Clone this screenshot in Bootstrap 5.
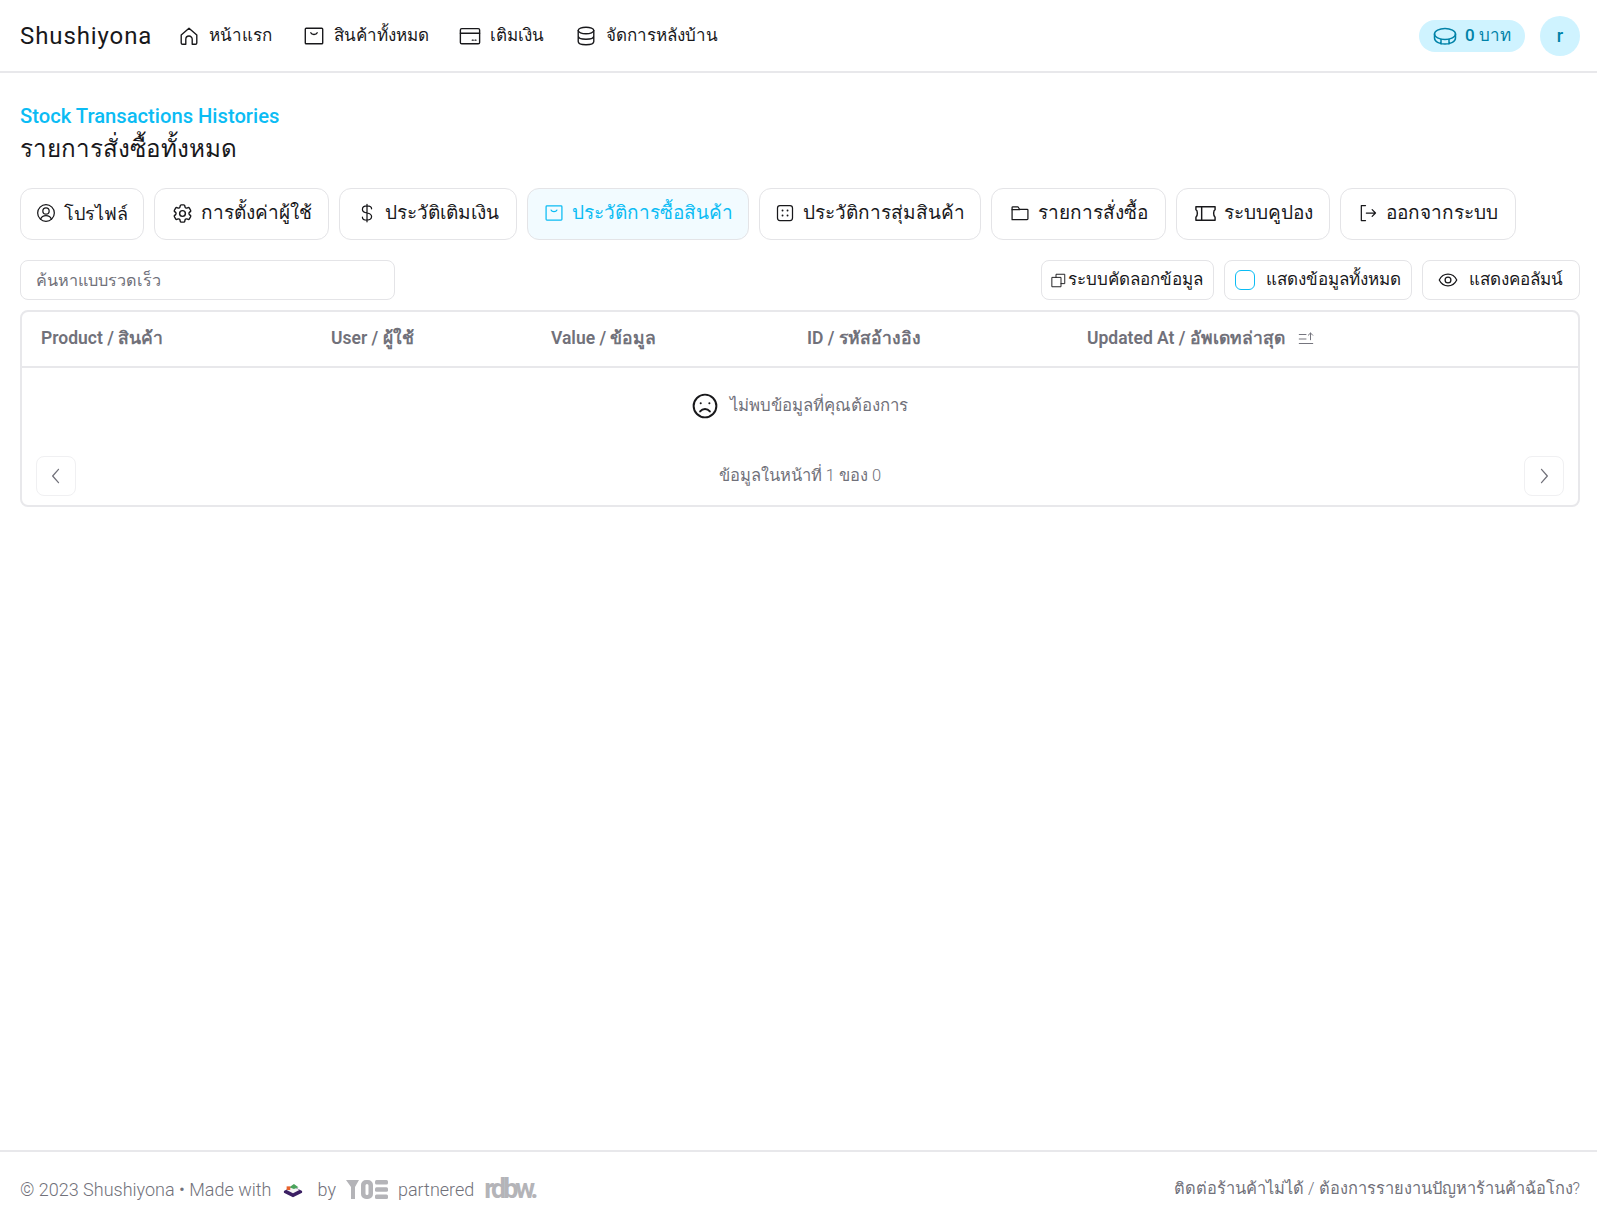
<!doctype html>
<html lang="th"><head><meta charset="utf-8"><title>Shushiyona</title>
<link href="https://cdn.jsdelivr.net/npm/bootstrap@5.3.0/dist/css/bootstrap.min.css" rel="stylesheet">
<style>
body{font-family:Roboto,"Noto Sans","Liberation Sans",sans-serif;color:#18181b;min-height:1227px;font-size:16px}
.tb{height:73px;border-bottom:2px solid #e8e8eb;padding:0 17px 0 20px}
.logo{font-size:24px;letter-spacing:.9px;color:#18181b;margin-right:26px;text-decoration:none}
.tlink{color:#18181b;font-size:17px;text-decoration:none;margin-right:30.5px;gap:9px}
.ic{width:20px;height:20px;fill:none;stroke:currentColor;stroke-width:1.5;stroke-linecap:round;stroke-linejoin:round;flex:none}
.tlink .ic{width:22px;height:22px}
.coin{background:#cff3ff;color:#0082a8;height:32px;border-radius:16px;padding:0 14px;font-weight:500;font-size:17px;gap:8px}
.coin .ic{width:24px;height:24px}
.avatar{background:#cff3ff;color:#0082a8;width:40px;height:40px;font-weight:500;font-size:18px;margin-left:15px}
.pagehead{padding:29px 17px 0 20px}
.eyebrow{color:#0bbcf4;font-size:20.2px;font-weight:500;line-height:29px}
.ttl{font-size:24.2px;font-weight:400;line-height:36px;margin:0}
.tabrow{gap:10px;margin-top:21px}
.tabb{height:52px;border:1px solid #e4e4e7;border-radius:12px;padding:0 0 2px;font-size:19px;gap:8px;color:#18181b;background:#fff;justify-content:center}
.tabb.on{background:#f2fbff;color:#0bbcf4}
.tabb:nth-child(1){width:124px;font-size:18px}.tabb:nth-child(2){width:175px}.tabb:nth-child(3){width:178px}.tabb:nth-child(4){width:222px}
.tabb:nth-child(5){width:222px}.tabb:nth-child(6){width:175px}.tabb:nth-child(7){width:154px}.tabb:nth-child(8){width:176px}
.tabb .gearic{width:23px;height:23px;margin:0 -1px 0 -1px}
.tabb .wideic{width:23px;height:23px;margin-right:-1px}
.sfield{width:375px;height:40px;border:1px solid #e4e4e7;border-radius:8px;font-size:16.2px;padding:0 15px;box-shadow:none}
.sfield::placeholder{color:#71717a;font-weight:300}
.toolrow{gap:10px}
.tool{height:40px;border:1px solid #e4e4e7;border-radius:8px;font-size:17px;padding:0 10px;gap:2px;color:#18181b;background:#fff}
.tool:first-child{padding-left:9px}
.tool.w{gap:11px;padding:0 16px 0 15px}
.tool .tiny{width:15px;height:15px}
.chk{width:20px;height:20px;border:1px solid #0bbcf4;border-radius:6px;margin-right:9px}
.panel{border:2px solid #e8e8eb;border-radius:8px;margin-top:10px}
.dtable{margin:0;table-layout:fixed}
.dtable th{height:55px;padding:0 0 2px 19px;color:#71717a;font-size:17.5px;font-weight:600;vertical-align:middle;border-bottom:2px solid #e8e8eb}
.dtable th:nth-child(1){width:290px}.dtable th:nth-child(2){width:220px}.dtable th:nth-child(3){width:256px}.dtable th:nth-child(4){width:280px}
.sorti{width:18px;height:18px;margin-left:8px;stroke-width:1.3}
.empty{height:76px;color:#71717a;font-size:16.8px;gap:12px;font-weight:300}
.pager{height:61px;padding:12px 14px 9px;color:#71717a;font-size:16.5px;font-weight:300}
.pbtn{width:40px;height:40px;border:1px solid #f0f0f2;border-radius:8px;color:#71717a;background:#fff}
.foot{height:77px;border-top:2px solid #e8e8eb;padding:0 17px 0 20px;color:#71717a;font-size:18px;font-weight:300}
.madeby{gap:10px}
.madeic{margin:0 5px 0 1px}
.footr{font-size:16.4px}
.rdbw{color:#b4b4b8;font-weight:700;font-size:27px;letter-spacing:-3px;line-height:1}
</style></head>
<body class="d-flex flex-column">
<header class="tb d-flex align-items-center">
<a class="logo" href="#">Shushiyona</a>
<a class="tlink d-flex align-items-center" href="#"><svg class="ic" viewBox="0 0 24 24"><path d="M3.500 11L12 3.500l8.500 7.500v8.500a1.500 1.500 0 0 1-1.500 1.500h-3.500v-5.500a3.500 3.500 0 0 0-7 0V21H5a1.500 1.500 0 0 1-1.500-1.500z"/></svg>หน้าแรก</a>
<a class="tlink d-flex align-items-center" href="#"><svg class="ic" viewBox="0 0 24 24"><rect x="2.500" y="3.500" width="19" height="17" rx="1"/><path d="M8.500 8.500c1 2.500 6 2.500 7 0"/></svg>สินค้าทั้งหมด</a>
<a class="tlink d-flex align-items-center" href="#"><svg class="ic" viewBox="0 0 24 24"><rect x="1.500" y="4" width="21" height="16.500" rx="1.500"/><path d="M1.500 9h21M14.500 16.500h1M17.500 16.500h1"/></svg>เติมเงิน</a>
<a class="tlink d-flex align-items-center" href="#"><svg class="ic" viewBox="0 0 24 24"><ellipse cx="12" cy="6" rx="8.500" ry="3.500"/><path d="M3.500 6v12c0 2 3.800 3.500 8.500 3.500s8.500-1.500 8.500-3.500V6M3.500 12c0 2 3.800 3.500 8.500 3.500s8.500-1.500 8.500-3.500"/></svg>จัดการหลังบ้าน</a>
<div class="ms-auto d-flex align-items-center">
<div class="coin d-flex align-items-center"><svg class="ic" viewBox="0 0 24 24"><ellipse cx="12" cy="10" rx="10.500" ry="5.500"/><path d="M1.500 10v4c0 3.500 4.700 6 10.500 6s10.500-2.500 10.500-6v-4M8 15.200V20M16 15.200V20"/></svg>0 บาท</div>
<div class="avatar rounded-circle d-flex align-items-center justify-content-center">r</div>
</div>
</header>
<main>
<div class="pagehead">
<div class="eyebrow">Stock Transactions Histories</div>
<h1 class="ttl">รายการสั่งซื้อทั้งหมด</h1>
<div class="tabrow d-flex">
<button class="tabb d-flex align-items-center"><svg class="ic" viewBox="0 0 24 24"><circle cx="12" cy="12" r="10"/><circle cx="12" cy="9.500" r="3.800"/><path d="M5.500 19.500c1-3 3.500-4.500 6.500-4.500s5.500 1.500 6.500 4.500"/></svg>โปรไฟล์</button>
<button class="tabb d-flex align-items-center"><svg class="ic gearic" viewBox="0 0 24 24"><path d="M9.594 3.940c.09-.542.56-.94 1.110-.94h2.593c.55 0 1.020.398 1.110.94l.213 1.281c.063.374.313.686.645.87.074.04.147.083.22.127.324.196.72.257 1.075.124l1.217-.456a1.125 1.125 0 011.370.49l1.296 2.247a1.125 1.125 0 01-.26 1.431l-1.003.827c-.293.24-.438.613-.431.992a6.759 6.759 0 010 .255c-.007.378.138.75.43.99l1.005.828c.424.35.534.954.26 1.430l-1.298 2.247a1.125 1.125 0 01-1.369.491l-1.217-.456c-.355-.133-.75-.072-1.076.124a6.570 6.570 0 01-.22.128c-.331.183-.581.495-.644.869l-.213 1.280c-.09.543-.56.941-1.110.941h-2.594c-.55 0-1.020-.398-1.110-.94l-.213-1.281c-.062-.374-.312-.686-.644-.87a6.520 6.520 0 01-.22-.127c-.325-.196-.72-.257-1.076-.124l-1.217.456a1.125 1.125 0 01-1.369-.49l-1.297-2.247a1.125 1.125 0 01.26-1.431l1.004-.827c.292-.24.437-.613.43-.992a6.932 6.932 0 010-.255c.007-.378-.138-.75-.43-.99l-1.004-.828a1.125 1.125 0 01-.26-1.430l1.297-2.247a1.125 1.125 0 011.370-.491l1.216.456c.356.133.751.072 1.076-.124.072-.044.146-.087.22-.128.332-.183.582-.495.644-.869l.214-1.281z"/><circle cx="12" cy="12" r="3"/></svg>การตั้งค่าผู้ใช้</button>
<button class="tabb d-flex align-items-center"><svg class="ic" viewBox="0 0 24 24"><path d="M12 1.500v21M17.500 7c0-2.200-2.300-3.500-5.500-3.500S6.500 5 6.500 7.700s2.300 3.700 5.500 4.300 5.500 1.600 5.500 4.300-2.300 4.200-5.500 4.200-5.500-1.300-5.500-3.500"/></svg>ประวัติเติมเงิน</button>
<button class="tabb on d-flex align-items-center"><svg class="ic" viewBox="0 0 24 24"><rect x="2.500" y="3.500" width="19" height="17" rx="1"/><path d="M8.500 8.500c1 2.500 6 2.500 7 0"/></svg>ประวัติการซื้อสินค้า</button>
<button class="tabb d-flex align-items-center"><svg class="ic" viewBox="0 0 24 24"><rect x="3" y="3" width="18" height="18" rx="3"/><path d="M9 9h.1M15 9h.1M9 15h.1M15 15h.1" stroke-width="2.200"/></svg>ประวัติการสุ่มสินค้า</button>
<button class="tabb d-flex align-items-center"><svg class="ic" viewBox="0 0 24 24"><path d="M2.500 20V5.500a1 1 0 0 1 1-1h6l2 3h9a1 1 0 0 1 1 1V19a1 1 0 0 1-1 1h-18z"/><path d="M2.500 8h9"/></svg>รายการสั่งซื้อ</button>
<button class="tabb d-flex align-items-center"><svg class="ic wideic" viewBox="0 0 24 24"><path d="M2 5h20v3c-2 1-2 6 0 8v3H2v-3c2-2 2-7 0-8zM8 5v14"/></svg>ระบบคูปอง</button>
<button class="tabb d-flex align-items-center"><svg class="ic" viewBox="0 0 24 24"><path d="M9 3H4v18h5M10 12h11M17 8l4 4-4 4"/></svg>ออกจากระบบ</button>
</div>
<div class="d-flex justify-content-between mt-3 pt-1">
<input class="form-control sfield" placeholder="ค้นหาแบบรวดเร็ว">
<div class="d-flex toolrow">
<div class="tool d-flex align-items-center"><svg class="ic tiny" viewBox="0 0 24 24"><rect x="2" y="7" width="14" height="15"/><path d="M8 7V2h14v15h-6"/></svg>ระบบคัดลอกข้อมูล</div>
<div class="tool d-flex align-items-center"><span class="chk"></span><span>แสดงข้อมูลทั้งหมด</span></div>
<div class="tool w d-flex align-items-center"><svg class="ic" viewBox="0 0 24 24"><path d="M1.500 12C4 7 8 5 12 5s8 2 10.500 7c-2.500 5-6.500 7-10.500 7S4 17 1.500 12z"/><circle cx="12" cy="12" r="3.500"/></svg>แสดงคอลัมน์</div>
</div>
</div>
<div class="panel">
<table class="table dtable"><thead><tr><th>Product / สินค้า</th><th>User / ผู้ใช้</th><th>Value / ข้อมูล</th><th>ID / รหัสอ้างอิง</th><th>Updated At / อัพเดทล่าสุด <svg class="ic sorti" viewBox="0 0 24 24"><path d="M3 6h9M3 12h9M3 18h18M18 13V4M15 7l3-3 3 3"/></svg></th></tr></thead></table>
<div class="empty d-flex align-items-center justify-content-center"><svg width="26" height="26" viewBox="0 0 24 24" fill="none" stroke="#18181b" stroke-width="1.800" stroke-linecap="round"><circle cx="12" cy="12" r="10.500"/><path d="M7.500 17c2.500-3 6.500-3 9 0M8 9.500h.1M16 9.500h.1"/></svg>ไม่พบข้อมูลที่คุณต้องการ</div>
<div class="pager d-flex align-items-center justify-content-between">
<button class="pbtn d-flex align-items-center justify-content-center p-0"><svg class="ic" viewBox="0 0 24 24"><path d="M15 4l-7 8 7 8"/></svg></button>
<span>ข้อมูลในหน้าที่ 1 ของ 0</span>
<button class="pbtn d-flex align-items-center justify-content-center p-0"><svg class="ic" viewBox="0 0 24 24"><path d="M9 4l7 8-7 8"/></svg></button>
</div>
</div>
</div>
</main>
<footer class="foot mt-auto d-flex align-items-center justify-content-between">
<div class="d-flex align-items-center madeby"><span>© 2023 Shushiyona • Made with</span>
<svg class="madeic" width="20" height="16" viewBox="0 0 22 16"><path d="M1 9l10-5 10 5v2l-10 5-10-5z" fill="#3b1f63"/><path d="M4 8l7-4 7 4-7 3.500z" fill="#f4f4f4"/><path d="M7 5l5-3.500 5 3.500-5 2z" fill="#4aa35c"/><path d="M4 4h4v4H4z" fill="#e8622c"/></svg>
<span>by</span>
<svg width="42" height="21" viewBox="0 0 42 21" fill="#b4b4b8"><path d="M0 1h13l-4 7v12H5V8z"/><path fill-rule="evenodd" d="M20 1h2a5 5 0 0 1 5 5v9a5 5 0 0 1-5 5h-2a5 5 0 0 1-5-5V6a5 5 0 0 1 5-5zm1 4a1.500 1.500 0 0 0-1.500 1.500v8a1.500 1.500 0 0 0 3 0v-8A1.500 1.500 0 0 0 21 5z"/><rect x="29" y="1" width="13" height="4.500" rx="1.500"/><rect x="29" y="8.200" width="13" height="4.500" rx="1.500"/><rect x="29" y="15.500" width="13" height="4.500" rx="1.500"/></svg>
<span>partnered</span>
<span class="rdbw">rdbw.</span></div>
<div class="footr">ติดต่อร้านค้าไม่ได้ / ต้องการรายงานปัญหาร้านค้าฉ้อโกง?</div>
</footer>
</body></html>
